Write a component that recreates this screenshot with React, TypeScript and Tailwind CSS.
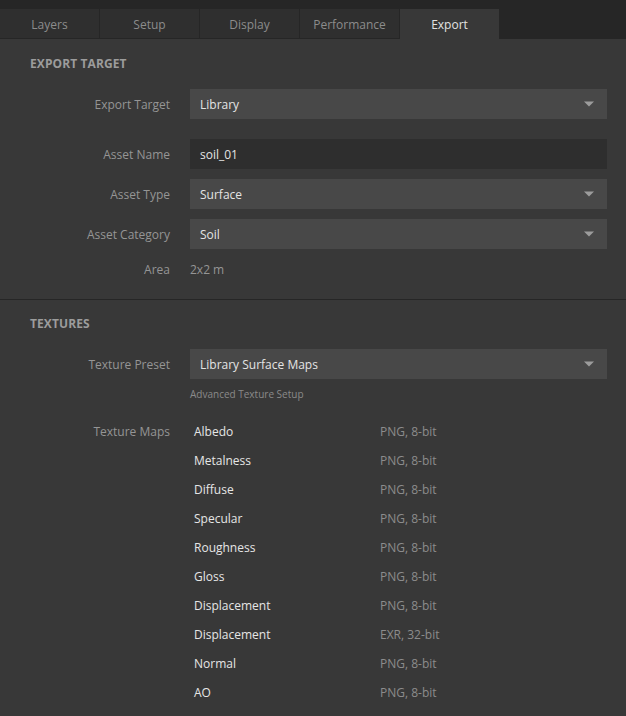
import React from "react";

const TABS = ["Layers", "Setup", "Display", "Performance", "Export"] as const;

const MAPS = [
    { name: "Albedo", format: "PNG, 8-bit" },
    { name: "Metalness", format: "PNG, 8-bit" },
    { name: "Diffuse", format: "PNG, 8-bit" },
    { name: "Specular", format: "PNG, 8-bit" },
    { name: "Roughness", format: "PNG, 8-bit" },
    { name: "Gloss", format: "PNG, 8-bit" },
    { name: "Displacement", format: "PNG, 8-bit" },
    { name: "Displacement", format: "EXR, 32-bit" },
    { name: "Normal", format: "PNG, 8-bit" },
    { name: "AO", format: "PNG, 8-bit" },
];

function Caret() {
    return (
        <svg width="10" height="6" viewBox="0 0 10 6" className="shrink-0">
            <path d="M0 0.5 H10 L5 5.5 Z" fill="#9c9c9c" />
        </svg>
    );
}

function Label({ children }: { children: React.ReactNode }) {
    return (
        <div className="w-[170px] shrink-0 pt-px text-right text-[12px] text-[#959595]">
            {children}
        </div>
    );
}

function Select({ value }: { value: string }) {
    return (
        <div className="ml-[20px] flex h-[30px] w-[417px] items-center justify-between bg-[#484848] pr-[13px] pl-[10px] text-[12px] text-[#e4e4e4]">
            <span className="pt-px">{value}</span>
            <Caret />
        </div>
    );
}

function Field({ label, children }: { label: string; children: React.ReactNode }) {
    return (
        <div className="flex h-[30px] items-center">
            <Label>{label}</Label>
            {children}
        </div>
    );
}

function SectionTitle({ children }: { children: React.ReactNode }) {
    return (
        <div className="px-[30px] text-[12px] leading-[16px] font-bold tracking-[0.1px] text-[#9c9c9c] uppercase">
            {children}
        </div>
    );
}

export default function App() {
    return (
        <div
            className="h-[716px] w-[626px] overflow-hidden bg-[#383838]"
            style={{ fontFamily: '"Open Sans", "Noto Sans", sans-serif' }}
        >
            <div className="flex h-[39px] bg-[#262626] pt-[9px]">
                {TABS.map((tab) => {
                    const active = tab === "Export";
                    return (
                        <div
                            key={tab}
                            className={
                                active
                                    ? "flex h-[30px] w-[99px] items-center justify-center bg-[#383838] pt-[2px] pb-px text-[12px] text-[#e2e2e2]"
                                    : "mr-px flex h-[29px] w-[99px] items-center justify-center bg-[#2f2f2f] pt-[2px] text-[12px] text-[#8c8c8c]"
                            }
                        >
                            {tab}
                        </div>
                    );
                })}
            </div>

            <div className="border-b border-[#262626] pt-[17px] pb-[19px]">
                <SectionTitle>Export Target</SectionTitle>
                <div className="mt-[17px]">
                    <Field label="Export Target">
                        <Select value="Library" />
                    </Field>
                </div>
                <div className="mt-[20px] flex flex-col gap-[10px]">
                    <Field label="Asset Name">
                        <div className="ml-[20px] flex h-[30px] w-[417px] items-center bg-[#2e2e2e] px-[10px] pt-px text-[12px] text-[#e4e4e4]">
                            soil_01
                        </div>
                    </Field>
                    <Field label="Asset Type">
                        <Select value="Surface" />
                    </Field>
                    <Field label="Asset Category">
                        <Select value="Soil" />
                    </Field>
                </div>
                <div className="mt-[11px] flex h-[20px] items-center">
                    <div className="w-[170px] shrink-0 text-right text-[12px] text-[#959595]">Area</div>
                    <span className="ml-[20px] text-[12px] text-[#959595]">2x2 m</span>
                </div>
            </div>

            <div className="pt-[16px]">
                <SectionTitle>Textures</SectionTitle>
                <div className="mt-[17px]">
                    <Field label="Texture Preset">
                        <Select value="Library Surface Maps" />
                    </Field>
                </div>
                <div className="mt-[8px] pl-[190px] text-[10px] leading-[14px] text-[#8a8a8a]">
                    Advanced Texture Setup
                </div>
                <div className="mt-[16px] flex">
                    <div className="flex h-[29px] items-center">
                        <Label>Texture Maps</Label>
                    </div>
                    <div className="ml-[24px] flex flex-col">
                        {MAPS.map((m, i) => (
                            <div key={i} className="flex h-[29px] items-center pt-px text-[12px]">
                                <span className="w-[186px] text-[#e6e6e6]">{m.name}</span>
                                <span className="text-[#8c8c8c]">{m.format}</span>
                            </div>
                        ))}
                    </div>
                </div>
            </div>
        </div>
    );
}
